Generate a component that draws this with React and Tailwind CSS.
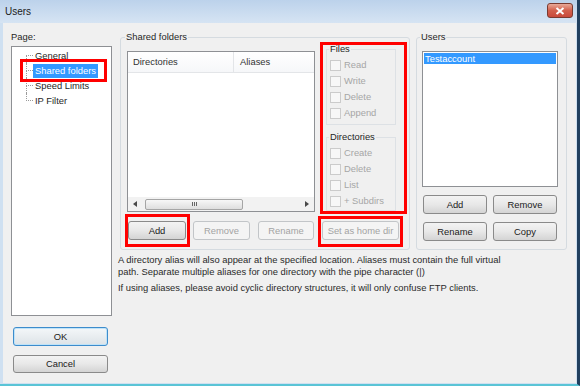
import React from "react";
import clsx from "clsx";

const pages = ["General", "Shared folders", "Speed Limits", "IP Filter"];

function Btn({ children, disabled, focus, className }) {
  return (
    <div
      className={clsx(
        "flex shrink-0 items-center justify-center rounded-[3px] border text-[9.4px]",
        disabled
          ? "border-[#c2c5c8] bg-[#f4f4f4] text-[#a3a3a3]"
          : focus
          ? "border-[#3d8ccc] bg-linear-to-b from-[#f4f7f9] to-[#dde3e7] text-[#1a1a1a] shadow-[inset_0_0_0_1px_#bfe3f8]"
          : "border-[#8a8a8a] bg-linear-to-b from-[#f3f3f3] via-[#e8e8e8] to-[#d4d4d4] text-[#1a1a1a]",
        className
      )}
    >
      {children}
    </div>
  );
}

function Check({ label }) {
  return (
    <div className="flex h-[16px] items-center">
      <span className="ml-[3px] h-[11px] w-[11px] border border-[#cbcbcb] bg-[#f7f7f7]" />
      <span className="ml-[3px] text-[#a6a6a6]">{label}</span>
    </div>
  );
}

function Arrow({ dir }) {
  return (
    <svg width="4" height="6" viewBox="0 0 4 6">
      {dir === "left" ? (
        <polygon points="4,0 4,6 0,3" fill="#4a4a4a" />
      ) : (
        <polygon points="0,0 0,6 4,3" fill="#4a4a4a" />
      )}
    </svg>
  );
}

export default function App() {
  return (
    <div
      className="relative flex h-[386px] w-[580px] flex-col overflow-hidden border-r-[3px] border-b-[2px] border-r-[#22405f] border-b-[#5ac4d6] bg-[#cfe0f1] text-[9.4px] leading-[12px] text-[#262626]"
      style={{ fontFamily: '"Liberation Sans", Arial, sans-serif' }}
    >
      {/* title bar */}
      <div className="flex h-[23px] shrink-0 items-center justify-between bg-linear-to-b from-[#bcd2eb] to-[#d6e4f3] pl-[5px] pr-[4px]">
        <span className="text-[10px] text-[#1c1c1c]">Users</span>
        <div className="mb-[2px] flex h-[15px] w-[26px] items-center justify-center rounded-[3px] border border-[#7a3a30] bg-linear-to-b from-[#e8a999] via-[#d25f4c] to-[#c9493a]">
          <svg width="10" height="8" viewBox="0 0 10 8">
            <path d="M1.5 1 L8.5 7 M8.5 1 L1.5 7" stroke="#fff" strokeWidth="2" />
          </svg>
        </div>
      </div>

      {/* client area */}
      <div className="ml-[3px] mr-[1px] mb-[1px] flex flex-1 bg-[#f0f0f0]">
        {/* left column */}
        <div className="ml-[8px] flex w-[101px] flex-col pt-[8px]">
          <div>Page:</div>
          <div className="mt-[3px] h-[270px] border border-[#8e9094] bg-white pt-[1px]">
            {pages.map((p, i) => (
              <div key={p} className="flex h-[15px] items-stretch">
                <div className="ml-[14px] flex w-[7px] flex-col">
                  <div
                    className={clsx(
                      "h-1/2 border-b border-dotted border-[#9a9a9a]",
                      i > 0 && "border-l"
                    )}
                  />
                  <div
                    className={clsx(
                      "h-1/2 border-dotted border-[#9a9a9a]",
                      i < pages.length - 1 && "border-l"
                    )}
                  />
                </div>
                <div className="flex items-center">
                  <span
                    className={clsx(
                      "px-[2px] leading-[14px]",
                      i === 1 && "bg-[#3399ff] text-white"
                    )}
                  >
                    {p}
                  </span>
                </div>
              </div>
            ))}
          </div>
          <Btn focus className="mt-[11px] ml-[2px] h-[19px] w-[95px]">
            OK
          </Btn>
          <Btn className="mt-[9px] ml-[2px] h-[18px] w-[95px]">Cancel</Btn>
        </div>

        {/* right area */}
        <div className="ml-[8px] flex flex-col pt-[8px]">
          <div className="flex gap-[6px]">
            {/* shared folders */}
            <fieldset className="w-[290px] rounded-[3px] border border-[#d5dbe0] pl-[6px] pb-[9px]">
              <legend className="-ml-[2px] px-[1px]">Shared folders</legend>
              <div className="flex">
                <div className="mt-[8px] flex h-[161px] w-[188px] flex-col border border-[#8e9094] bg-white">
                  <div className="flex h-[21px] border-b border-[#e3e5e8] bg-linear-to-b from-white to-[#f6f7f9] text-[#333]">
                    <div className="flex w-[106px] items-center border-r border-[#e3e5e8] pl-[5px]">
                      Directories
                    </div>
                    <div className="flex items-center pl-[6px]">Aliases</div>
                  </div>
                  <div className="flex-1" />
                  <div className="flex h-[14px] items-center bg-[#f2f2f2]">
                    <div className="flex w-[14px] items-center justify-center">
                      <Arrow dir="left" />
                    </div>
                    <div className="ml-[3px] flex h-[11px] w-[98px] items-center justify-center gap-[1px] rounded-[2px] border border-[#a5a5a5] bg-linear-to-b from-[#f7f7f7] to-[#dedede]">
                      <span className="h-[4px] w-[1px] bg-[#666]" />
                      <span className="h-[4px] w-[1px] bg-[#666]" />
                      <span className="h-[4px] w-[1px] bg-[#666]" />
                    </div>
                    <div className="flex-1" />
                    <div className="flex w-[14px] items-center justify-center">
                      <Arrow dir="right" />
                    </div>
                  </div>
                </div>

                {/* permissions */}
                <div className="ml-[7px] flex w-[80px] flex-col">
                  <fieldset className="ml-[4px] w-[70px] border border-[#dde1e5] pb-[3px]">
                    <legend className="ml-[2px] px-[1px]">Files</legend>
                    <div className="mt-[2px]">
                      <Check label="Read" />
                      <Check label="Write" />
                      <Check label="Delete" />
                      <Check label="Append" />
                    </div>
                  </fieldset>
                  <fieldset className="mt-[6px] ml-[4px] w-[70px] border border-[#dde1e5] pb-[1px]">
                    <legend className="ml-[2px] px-[1px]">Directories</legend>
                    <div className="mt-[2px]">
                      <Check label="Create" />
                      <Check label="Delete" />
                      <Check label="List" />
                      <Check label="+ Subdirs" />
                    </div>
                  </fieldset>
                </div>
              </div>
              <div className="mt-[9px] flex">
                <Btn className="ml-[1px] h-[19px] w-[58px]">Add</Btn>
                <Btn disabled className="ml-[7px] h-[19px] w-[57px]">
                  Remove
                </Btn>
                <Btn disabled className="ml-[8px] h-[19px] w-[56px]">
                  Rename
                </Btn>
                <Btn disabled className="ml-[8px] h-[19px] w-[77px]">
                  Set as home dir
                </Btn>
              </div>
            </fieldset>

            {/* users */}
            <fieldset className="w-[151px] rounded-[3px] border border-[#d5dbe0] pl-[5px] pb-[8px]">
              <legend className="-ml-[2px] px-[1px]">Users</legend>
              <div className="mt-[8px] h-[136px] w-[136px] border border-[#8e9094] bg-white p-[1px]">
                <div className="bg-[#3399ff] pl-[1px] leading-[11px] text-white">
                  Testaccount
                </div>
              </div>
              <div className="mt-[8px] flex gap-[6px] pl-[1px]">
                <Btn className="h-[19px] w-[64px]">Add</Btn>
                <Btn className="h-[19px] w-[64px]">Remove</Btn>
              </div>
              <div className="mt-[8px] flex gap-[6px] pl-[1px]">
                <Btn className="h-[19px] w-[64px]">Rename</Btn>
                <Btn className="h-[19px] w-[64px]">Copy</Btn>
              </div>
            </fieldset>
          </div>

          <div className="mt-[4px] -ml-[2px] text-[#2a2a2a]">
            <p>
              A directory alias will also appear at the specified location. Aliases must contain the full virtual
            </p>
            <p>path. Separate multiple aliases for one directory with the pipe character (|)</p>
            <p className="mt-[4px]">
              If using aliases, please avoid cyclic directory structures, it will only confuse FTP clients.
            </p>
          </div>
        </div>
      </div>

      {/* red annotation boxes */}
      <div className="absolute left-[20px] top-[59px] h-[23px] w-[87px] border-[3px] border-[#ff0000]" />
      <div className="absolute left-[320px] top-[42px] h-[172px] w-[87px] border-[3px] border-[#ff0000]" />
      <div className="absolute left-[318px] top-[216px] h-[31px] w-[85px] border-[3px] border-[#ff0000]" />
      <div className="absolute left-[125px] top-[214px] h-[33px] w-[65px] border-[3px] border-[#ff0000]" />
    </div>
  );
}
